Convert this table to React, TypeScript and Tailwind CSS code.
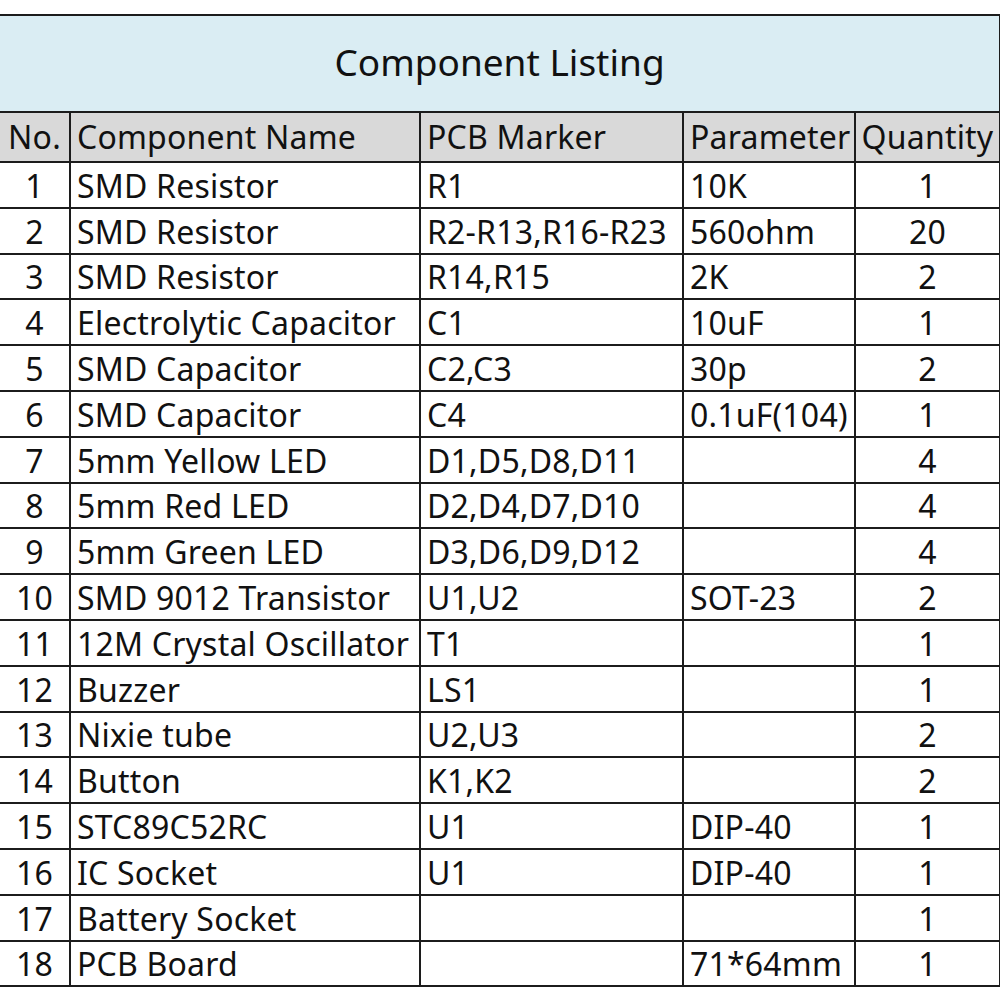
const rows: [string, string, string, string, string][] = [
  ['1', 'SMD Resistor', 'R1', '10K', '1'],
  ['2', 'SMD Resistor', 'R2-R13,R16-R23', '560ohm', '20'],
  ['3', 'SMD Resistor', 'R14,R15', '2K', '2'],
  ['4', 'Electrolytic Capacitor', 'C1', '10uF', '1'],
  ['5', 'SMD Capacitor', 'C2,C3', '30p', '2'],
  ['6', 'SMD Capacitor', 'C4', '0.1uF(104)', '1'],
  ['7', '5mm Yellow LED', 'D1,D5,D8,D11', '', '4'],
  ['8', '5mm Red LED', 'D2,D4,D7,D10', '', '4'],
  ['9', '5mm Green LED', 'D3,D6,D9,D12', '', '4'],
  ['10', 'SMD 9012 Transistor', 'U1,U2', 'SOT-23', '2'],
  ['11', '12M Crystal Oscillator', 'T1', '', '1'],
  ['12', 'Buzzer', 'LS1', '', '1'],
  ['13', 'Nixie tube', 'U2,U3', '', '2'],
  ['14', 'Button', 'K1,K2', '', '2'],
  ['15', 'STC89C52RC', 'U1', 'DIP-40', '1'],
  ['16', 'IC Socket', 'U1', 'DIP-40', '1'],
  ['17', 'Battery Socket', '', '', '1'],
  ['18', 'PCB Board', '', '71*64mm', '1'],
];

export default function App() {
  return (
    <div className="w-[1000px] h-[1000px] bg-white pt-[14px] overflow-hidden" style={{ fontFamily: '"Noto Sans", "Open Sans", sans-serif' }}>
      <table className="w-[1000px] table-fixed border-collapse text-[#111] text-[32px] tracking-[0.2px] leading-none">
        <colgroup>
          <col className="w-[70px]" />
          <col className="w-[350px]" />
          <col className="w-[263px]" />
          <col className="w-[172px]" />
          <col className="w-[145px]" />
        </colgroup>
        <thead>
          <tr className="h-[97px] bg-[#daedf3]">
            <th colSpan={5} className="border-2 border-l-0 border-[#1c1c1c] text-[37px] tracking-normal font-normal text-center pb-[4px]">
              Component Listing
            </th>
          </tr>
          <tr className="h-[50px] bg-[#d9d9d9]">
            <th className="border-2 border-l-0 border-[#1c1c1c] font-normal text-center whitespace-nowrap">No.</th>
            <th className="border-2 border-[#1c1c1c] font-normal text-left pl-[6px] whitespace-nowrap">Component Name</th>
            <th className="border-2 border-[#1c1c1c] font-normal text-left pl-[6px] whitespace-nowrap">PCB Marker</th>
            <th className="border-2 border-[#1c1c1c] font-normal text-left pl-[6px] whitespace-nowrap">Parameter</th>
            <th className="border-2 border-[#1c1c1c] font-normal text-center whitespace-nowrap">Quantity</th>
          </tr>
        </thead>
        <tbody>
          {rows.map((r) => (
            <tr key={r[0]} className="h-[45.8px]">
              <td className="border-2 border-l-0 border-[#1c1c1c] text-center whitespace-nowrap pt-[2px]">{r[0]}</td>
              <td className="border-2 border-[#1c1c1c] pl-[6px] whitespace-nowrap pt-[2px]">{r[1]}</td>
              <td className="border-2 border-[#1c1c1c] pl-[6px] whitespace-nowrap pt-[2px]">{r[2]}</td>
              <td className="border-2 border-[#1c1c1c] pl-[6px] whitespace-nowrap pt-[2px]">{r[3]}</td>
              <td className="border-2 border-[#1c1c1c] text-center whitespace-nowrap pt-[2px]">{r[4]}</td>
            </tr>
          ))}
        </tbody>
      </table>
    </div>
  );
}
